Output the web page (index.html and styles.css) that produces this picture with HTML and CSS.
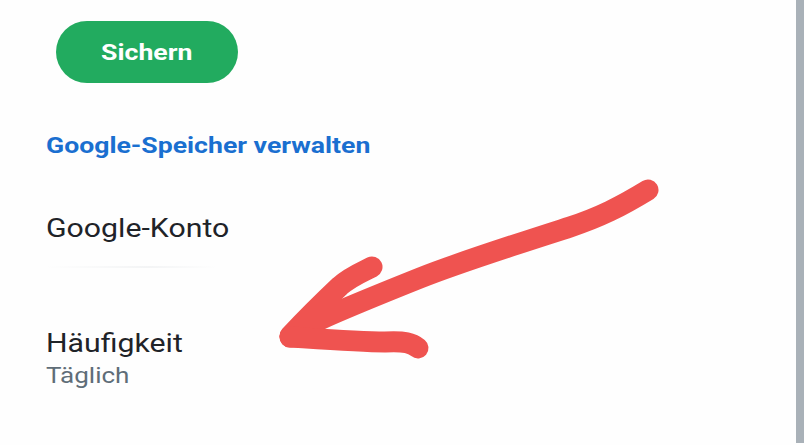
FILE: index.html
```html
<!DOCTYPE html>
<html lang="de">
<head>
    <meta charset="UTF-8">
    <meta name="viewport" content="width=device-width, initial-scale=1.0">
    <title>Sichern</title>
    <link rel="stylesheet" href="styles.css">
</head>
<body>
    <div class="screen">
        <div class="content">
            <button class="save-btn"><span class="wide">Sichern</span></button>
            <a class="manage-link" href="#"><span class="wide">Google-Speicher verwalten</span></a>

            <div class="setting">
                <div class="setting-title"><span class="wide">Google-Konto</span></div>
                <div class="setting-blur"></div>
            </div>

            <div class="setting freq">
                <div class="setting-title"><span class="wide">Häufigkeit</span></div>
                <div class="setting-value"><span class="wide">Täglich</span></div>
            </div>
        </div>
        <div class="scrollbar"></div>

        <!-- hand drawn arrow over the screenshot -->
        <svg class="arrow" width="804" height="445" viewBox="0 0 804 445">
            <g fill="none" stroke="#ef5350" stroke-width="21" stroke-linecap="round" stroke-linejoin="round">
                <path d="M648 190 C620 207 600 217 570 227 C520 243 460 262 420 278 C380 294 340 310 315 322 C300 329 293 334 290 337"/>
                <path d="M372 267 C360 273 350 277 340 286 C322 303 305 320 290 336"/>
                <path d="M290 337 C320 339 360 342 385 342 C405 341 412 343 418 348"/>
            </g>
        </svg>
    </div>
</body>
</html>
```

FILE: styles.css
```css
* {
    margin: 0;
    padding: 0;
    box-sizing: border-box;
    font-family: Roboto, "Noto Sans", sans-serif;
}

body {
    background: #fefefe;
    width: 804px;
    height: 445px;
    overflow: hidden;
}

.screen {
    position: relative;
    display: flex;
    width: 804px;
    height: 445px;
}

.content {
    flex: 1;
    padding: 21px 0 0 46px;
    display: flex;
    flex-direction: column;
    align-items: flex-start;
}

/* the screenshot is stretched sideways a bit */
.wide {
    display: inline-block;
    transform: scaleX(1.21);
    transform-origin: left center;
}

.save-btn {
    width: 182px;
    height: 62px;
    margin-left: 10px;
    border: none;
    border-radius: 31px;
    background: #22ab5f;
    color: #fff;
    font-size: 22px;
    font-weight: 700;
}

.save-btn .wide {
    transform-origin: center;
}

.manage-link {
    margin-top: 50px;
    color: #1a6fd0;
    font-size: 22px;
    line-height: 26px;
    font-weight: 700;
    text-decoration: none;
}

.setting {
    margin-top: 55px;
}

.setting-title {
    color: #1f2328;
    font-size: 25px;
    line-height: 30px;
}

.setting-blur {
    height: 2px;
    width: 170px;
    margin-top: 22px;
    background: linear-gradient(90deg, transparent, #f3f4f5 60%, transparent);
}

.freq {
    margin-top: 61px;
}

.setting-value {
    margin-top: 4px;
    color: #5f6d78;
    font-size: 21.5px;
    line-height: 26px;
}

.scrollbar {
    width: 8px;
    height: 443px;
    background: #a9b1b8;
}

.arrow {
    position: absolute;
    left: 0;
    top: 0;
}
```
